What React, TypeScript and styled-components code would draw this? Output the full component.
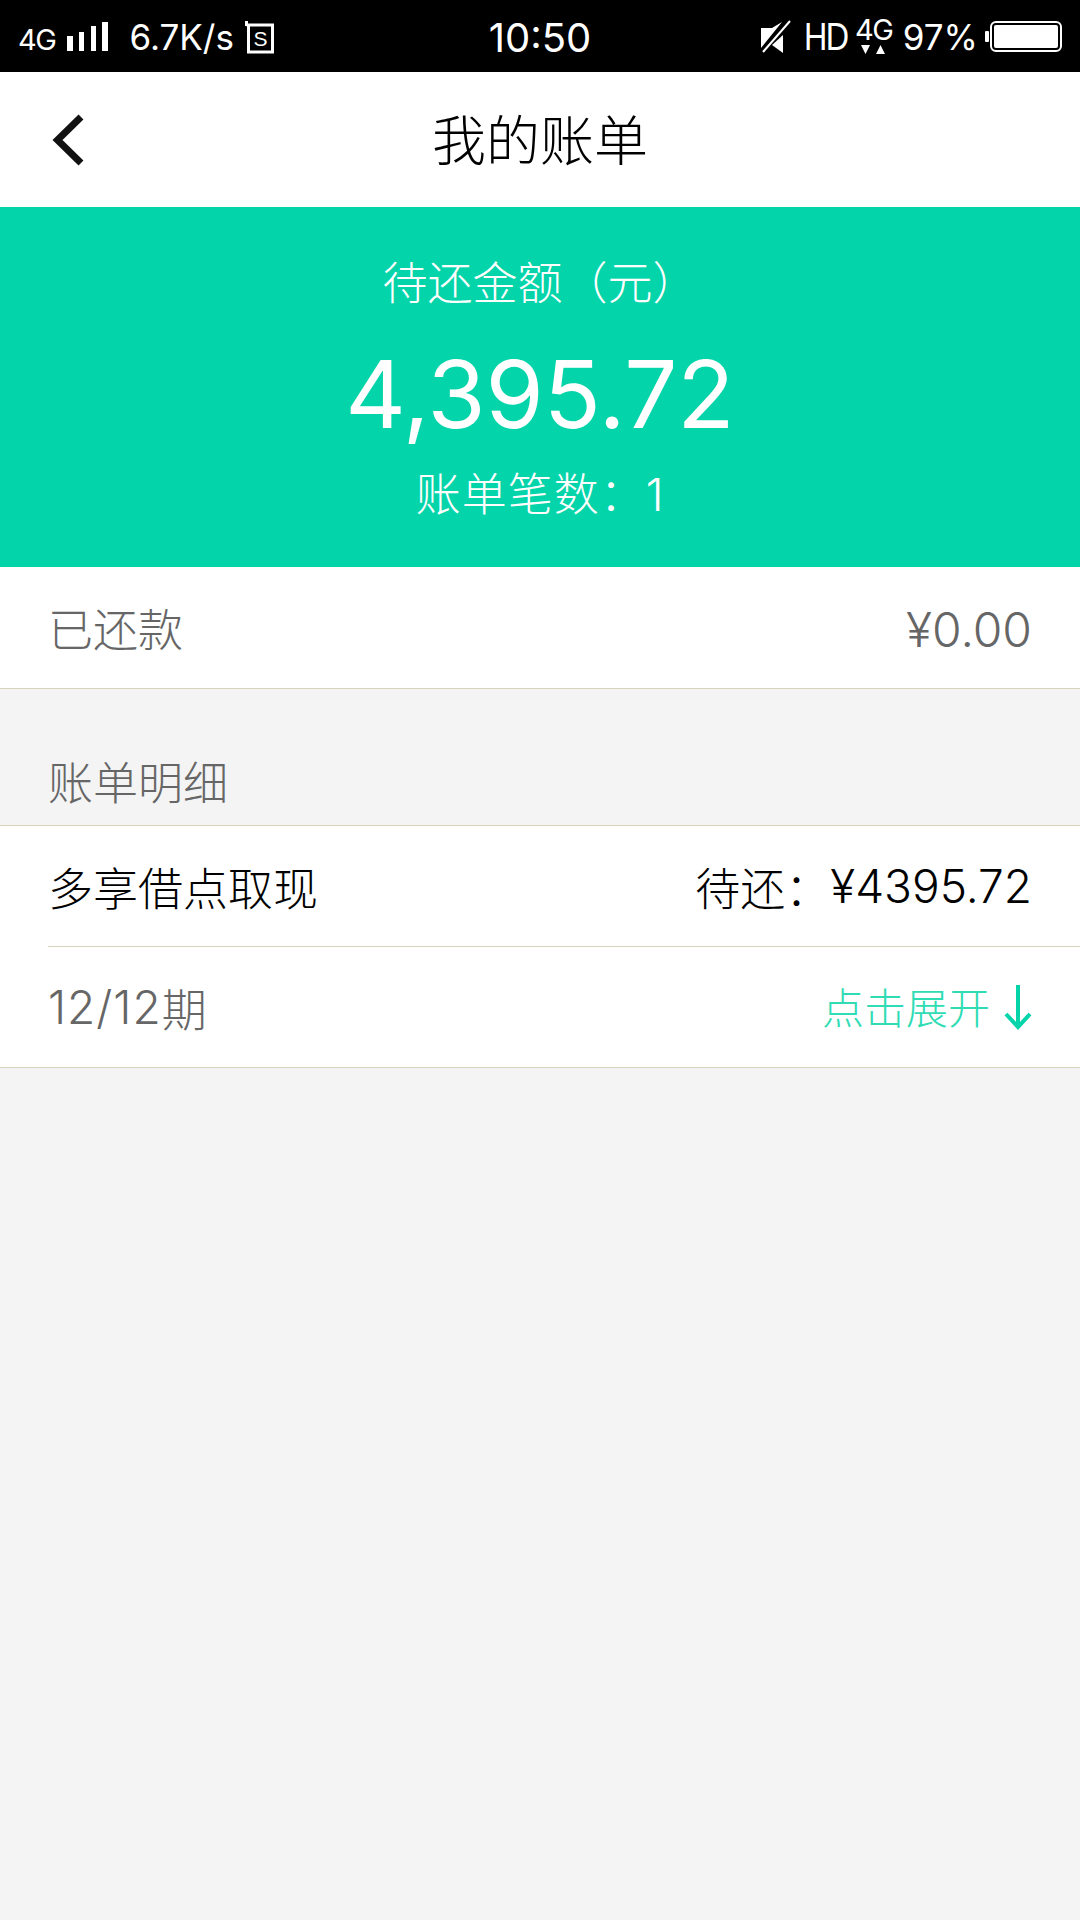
import styled, { createGlobalStyle } from 'styled-components'

const GlobalStyle = createGlobalStyle`
  html, body {
    margin: 0;
    padding: 0;
    background: #f4f4f4;
  }
  body {
    font-family: "Inter", "Noto Sans CJK SC", sans-serif;
  }
`

const Page = styled.div`
  width: 1080px;
  height: 1920px;
  display: flex;
  flex-direction: column;
  background: #f4f4f4;
  overflow: hidden;
`

const StatusBar = styled.div`
  height: 72px;
  box-sizing: border-box;
  background: #000;
  color: #fff;
  display: grid;
  grid-template-columns: 1fr auto 1fr;
  align-items: center;
  font-family: "Inter", sans-serif;
  padding: 2px 18px 0 18px;
`

const StatusLeft = styled.div`
  display: flex;
  align-items: center;
`

const StatusRight = styled.div`
  display: flex;
  align-items: center;
  justify-content: flex-end;
`

const Network = styled.span`
  font-size: 29px;
  letter-spacing: -1.5px;
  margin: 4px 12px 0 0;
`

const Speed = styled.span`
  font-size: 35px;
  margin: 0 11px 0 21px;
`

const Clock = styled.span`
  font-size: 40px;
`

const HdLabel = styled.span`
  font-size: 38px;
  font-family: "Liberation Sans", sans-serif;
  letter-spacing: -2px;
  margin: 0 -1px 0 12px;
  transform: scaleX(0.85);
  transform-origin: left center;
`

const Percent = styled.span`
  font-size: 35px;
  margin: 0 7px 0 9px;
`

const Header = styled.div`
  height: 135px;
  background: #fff;
  display: flex;
  align-items: center;
  justify-content: center;
  position: relative;
`

const Back = styled.svg`
  position: absolute;
  left: 49px;
  top: 41px;
`

const Title = styled.div`
  font-size: 54px;
  font-family: "Noto Sans CJK SC", sans-serif;
  font-weight: 300;
  color: #000;
  margin-top: -4px;
`

const Summary = styled.div`
  height: 360px;
  background: #03d4a9;
  color: #fff;
  display: flex;
  flex-direction: column;
  align-items: center;
`

const SummaryLabel = styled.div`
  font-size: 45px;
  font-weight: 300;
  line-height: 60px;
  margin-top: 47px;
`

const Amount = styled.div`
  font-size: 94px;
  line-height: 110px;
  margin-top: 25px;
`

const SummaryCount = styled.div`
  font-size: 45px;
  font-weight: 300;
  letter-spacing: 1px;
  line-height: 60px;
  margin-top: 16px;
`

const Row = styled.div<{ $border?: boolean }>`
  height: ${(p) => (p.$border ? 121 : 120)}px;
  background: #fff;
  display: flex;
  align-items: center;
  justify-content: space-between;
  padding: 0 48px;
  border-bottom: ${(p) => (p.$border ? '1px solid #d6d5bb' : 'none')};
  box-sizing: border-box;
`

const PaidRow = styled(Row)`
  height: 122px;
`

const Cell = styled.span<{ $muted?: boolean; $accent?: boolean }>`
  font-size: ${(p) => (p.$accent ? 42 : 45)}px;
  font-weight: 300;
  margin-bottom: ${(p) => (p.$accent ? 4 : 0)}px;
  color: ${(p) => (p.$accent ? '#2fdcb4' : p.$muted ? '#666' : '#000')};
`

const Money = styled.span<{ $muted?: boolean; $large?: boolean }>`
  font-size: ${(p) => (p.$large ? 48 : 46)}px;
  font-weight: 350;
  margin-top: ${(p) => (p.$large ? 4 : 0)}px;
  color: ${(p) => (p.$muted ? '#666' : '#000')};
`

const Period = styled(Money)`
  letter-spacing: 1px;
`

const Group = styled.span`
  display: flex;
  align-items: center;
`

const RuleWrap = styled.div`
  background: #fff;
`

const InsetRule = styled.div`
  height: 1px;
  margin-left: 48px;
  background: #d6d5bb;
`

const SectionTitle = styled.div`
  height: 137px;
  box-sizing: border-box;
  padding: 0 48px 12px;
  display: flex;
  align-items: flex-end;
  font-size: 45px;
  font-weight: 300;
  color: #666;
  border-bottom: 1px solid #d6d5bb;
`

const Expand = styled.div`
  display: flex;
  align-items: center;
  gap: 14px;
`

export default function App() {
  return (
    <Page>
      <GlobalStyle />
      <StatusBar>
        <StatusLeft>
          <Network>4G</Network>
          <svg width="41" height="30" viewBox="0 0 41 30" fill="#fff">
            <rect x="0" y="14" width="6" height="15" />
            <rect x="12" y="10" width="5" height="19" />
            <rect x="24" y="4" width="5" height="25" />
            <rect x="35" y="0" width="6" height="29" />
          </svg>
          <Speed>6.7K/s</Speed>
          <svg width="29" height="33" viewBox="0 0 29 33">
            <path d="M1.500 0v5M1.500 4H27.500V31H3.500V4" fill="none" stroke="#fff" strokeWidth="3" />
            <text x="15.500" y="25" textAnchor="middle" fill="#fff" fontSize="21" fontFamily="Liberation Sans">
              S
            </text>
          </svg>
        </StatusLeft>
        <Clock>10:50</Clock>
        <StatusRight>
          <svg width="32" height="34" viewBox="0 0 32 34" fill="#fff">
            <path d="M1 8h11L22 2 1 28z" />
            <path d="M12 25l11-10v18z" />
            <path d="M3 32L30 1" stroke="#fff" strokeWidth="2" />
          </svg>
          <HdLabel>HD</HdLabel>
          <svg width="40" height="40" viewBox="0 0 40 40" fill="#fff">
            <text x="1" y="23" fontSize="29" fontFamily="Inter" letterSpacing="-1.5">
              4G
            </text>
            <path d="M7 28h9l-4.500 9zM22 37h9l-4.500-9z" />
          </svg>
          <Percent>97%</Percent>
          <svg width="77" height="32" viewBox="0 0 77 32">
            <rect x="0" y="10" width="4" height="11" rx="1" fill="#fff" />
            <rect x="6" y="1" width="70" height="29" rx="5" fill="none" stroke="#fff" strokeWidth="2" />
            <rect x="9" y="4" width="64" height="23" rx="2" fill="#fff" />
          </svg>
        </StatusRight>
      </StatusBar>
      <Header>
        <Back width="38" height="54" viewBox="0 0 38 54">
          <path d="M32 4L8.500 27 32 50" fill="none" stroke="#111" strokeWidth="7" />
        </Back>
        <Title>我的账单</Title>
      </Header>
      <Summary>
        <SummaryLabel>待还金额（元）</SummaryLabel>
        <Amount>4,395.72</Amount>
        <SummaryCount>账单笔数：1</SummaryCount>
      </Summary>
      <PaidRow $border>
        <Cell $muted>已还款</Cell>
        <Money $muted $large>¥0.00</Money>
      </PaidRow>
      <SectionTitle>账单明细</SectionTitle>
      <Row>
        <Cell>多享借点取现</Cell>
        <Group>
          <Cell>待还：</Cell>
          <Money>¥4395.72</Money>
        </Group>
      </Row>
      <RuleWrap>
        <InsetRule />
      </RuleWrap>
      <Row $border>
        <Group>
          <Period $muted>12/12</Period>
          <Cell $muted>期</Cell>
        </Group>
        <Expand>
          <Cell $accent>点击展开</Cell>
          <svg width="28" height="46" viewBox="0 0 28 46">
            <path d="M14 1v42M2 30l12 13 12-13" fill="none" stroke="#03d4a9" strokeWidth="4" />
          </svg>
        </Expand>
      </Row>
    </Page>
  )
}
